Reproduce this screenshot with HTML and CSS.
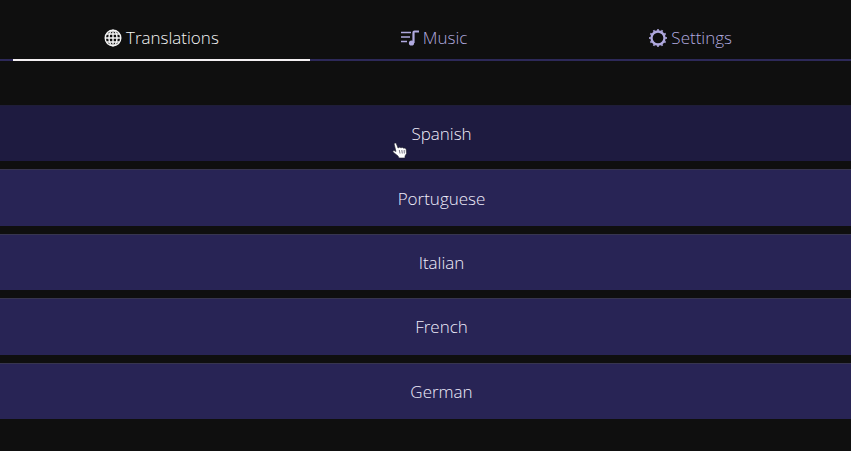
FILE: index.html
```html
<!DOCTYPE html>
<html lang="en">
<head>
<meta charset="utf-8">
<title>Translations</title>
<link rel="stylesheet" href="styles.css">
</head>
<body>
<nav class="tabs">
  <button class="tab active" type="button">
    <svg class="icon" viewBox="0 0 18 18" fill="none" stroke="currentColor" stroke-width="1.4"><circle cx="9" cy="9" r="7.8"/><ellipse cx="9" cy="9" rx="4" ry="7.8"/><path d="M9 1v16M1 9h16M2.5 5h13M2.5 13h13"/></svg>
    <span>Translations</span>
  </button>
  <button class="tab" type="button">
    <svg class="icon" viewBox="0 0 18 18" fill="none" stroke="currentColor" stroke-width="1.5"><path d="M0 3.500h10M0 8h9M0 12.500h6"/><path d="M12.500 14V3.500q0-1 1-1H18" stroke-width="2.200"/><circle cx="10.500" cy="14" r="2.600" fill="currentColor" stroke="none"/></svg>
    <span>Music</span>
  </button>
  <button class="tab" type="button">
    <svg class="icon" viewBox="0 0 18 18" fill="none" stroke="currentColor"><circle cx="9" cy="9" r="6.500" stroke-width="2.300"/><circle cx="9" cy="9" r="8" stroke-width="1.800" pathLength="120" stroke-dasharray="4 6" stroke-dashoffset="2"/></svg>
    <span>Settings</span>
  </button>
</nav>
<main class="languages">
  <button class="language hovered" type="button"><span class="label">Spanish
    <svg class="pointer" viewBox="0 0 16 17"><path d="M2 1.500q1.500-1.300 2.500.5L6 6l1.500-.8 1.500.6 1.500-.4 1.200.8 1.500-.2 1 1.500.3 4-1.500 2.500v2H7l-1-2-5-4q-.8-1.500 1-1.500l2 1z" fill="#fff" stroke="#242330" stroke-width=".6"/><path d="M7.300 8l.7 3.500M9.800 8l.5 3.500M12.200 8l.1 3.500" fill="none" stroke="#555267" stroke-width=".8"/></svg></span></button>
  <button class="language" type="button">Portuguese</button>
  <button class="language" type="button">Italian</button>
  <button class="language" type="button">French</button>
  <button class="language" type="button">German</button>
</main>
</body>
</html>
```
FILE: styles.css
```css
* {
  box-sizing: border-box;
}

body {
  display: flex;
  flex-direction: column;
  min-height: 100vh;
  margin: 0;
  padding: 16px 0 32px;
  background: #0f0f0f;
  font-family: "Open Sans", "Noto Sans", sans-serif;
  font-size: 17px;
  font-weight: 300;
}

button {
  border: 0;
  background: none;
  font: inherit;
  cursor: pointer;
}

.tabs {
  display: flex;
  padding: 0 28px 0 13px;
  border-bottom: 2px solid #2d2959;
}

.tab {
  display: flex;
  flex: 1 1 auto;
  align-items: center;
  justify-content: center;
  gap: 4px;
  height: 45px;
  margin-bottom: -2px;
  padding: 0;
  border-bottom: 2px solid transparent;
  color: #b0a9df;
  line-height: 24px;
}

.tab.active {
  border-color: #f4f0f2;
  color: #f5f5f5;
}

.icon {
  width: 18px;
  height: 18px;
}

.languages {
  display: grid;
  flex: 1;
  grid-auto-rows: 1fr;
  gap: 8px;
  margin-top: 44px;
}

.language {
  min-height: 48px;
  padding: 0 0 0 32px;
  border-top: 1px solid #37354f;
  background: #282455;
  color: #f0edfb;
}

.language.hovered {
  border-color: #1f1d38;
  background: #1e1b40;
}

.label {
  position: relative;
}

.pointer {
  position: absolute;
  top: 20px;
  left: -19px;
  width: 16px;
  height: 17px;
}
```
